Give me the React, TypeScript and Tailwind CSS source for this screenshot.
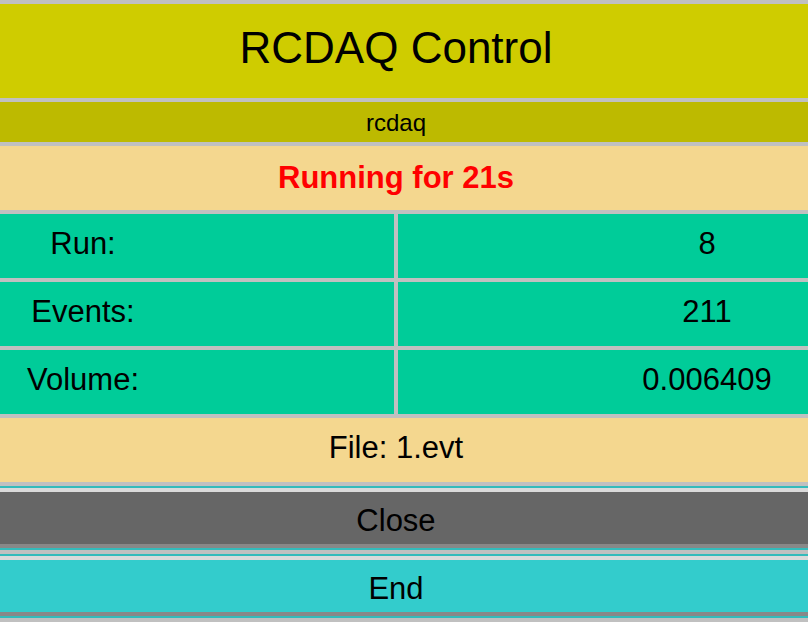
import { Fragment } from "react";

const stats = [
  { label: "Run:", value: "8" },
  { label: "Events:", value: "211" },
  { label: "Volume:", value: "0.006409" },
];

const Button: React.FC<{ label: string; color: string }> = ({ label, color }) => {
  return (
    <div className="bg-[#33bbbb] py-[2px]">
      <button
        className={`w-full h-[60px] border-t-4 border-b-4 border-t-[#dadada] border-b-[#888888] ${color} pr-4 pt-[4px] text-[31px] leading-[31px] text-black text-center block`}
      >
        {label}
      </button>
    </div>
  );
};

const App: React.FC = () => {
  return (
    <div className="w-[808px] h-[622px] overflow-hidden bg-[#c0c0c0] py-1 flex flex-col gap-1 font-['Liberation_Sans',Arial,sans-serif] text-black">
      <div className="h-[94px] shrink-0 bg-[#cfcc00] pr-4 pt-[22px] text-center text-[44px] leading-[44px]">
        RCDAQ Control
      </div>

      <div className="h-[40px] shrink-0 bg-[#bdba00] pr-4 pt-[9px] text-center text-[24px] leading-[24px]">
        rcdaq
      </div>

      <div className="h-[64px] shrink-0 bg-[#f4d78f] pr-4 pt-[16px] text-center text-[31px] leading-[31px] font-bold text-[#ff0000]">
        Running for 21s
      </div>

      <div className="grid grid-cols-[394px_1fr] gap-1 shrink-0">
        {stats.map((item) => {
          return (
            <Fragment key={item.label}>
              <div className="h-[64px] bg-[#00cc99] pt-[14px] text-[31px] leading-[31px]">
                <div className="w-[166px] text-center">{item.label}</div>
              </div>
              <div className="h-[64px] bg-[#00cc99] pt-[14px] pl-[224px] pr-4 text-[31px] leading-[31px] text-center">
                {item.value}
              </div>
            </Fragment>
          );
        })}
      </div>

      <div className="h-[64px] shrink-0 bg-[#f4d78f] pr-4 pt-[14px] text-center text-[31px] leading-[31px]">
        File: 1.evt
      </div>

      <Button label="Close" color="bg-[#666666]" />
      <Button label="End" color="bg-[#33cccc]" />
    </div>
  );
};

export default App;
